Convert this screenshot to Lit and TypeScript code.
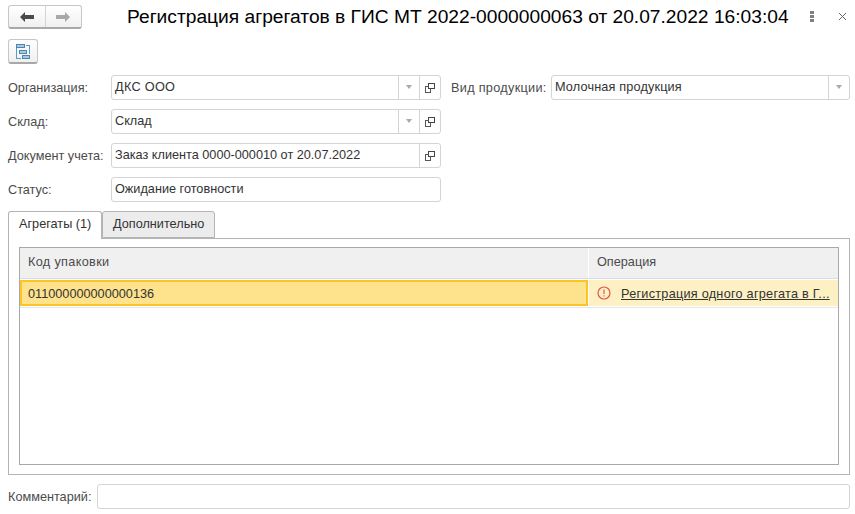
import { LitElement, html, css, svg } from "lit";
import { customElement } from "lit/decorators.js";

const openIcon = svg`<svg width="10" height="10" viewBox="0 0 10 10" fill="none" stroke-width="1" shape-rendering="crispEdges"><rect x="3.5" y="0.5" width="6" height="5" stroke="#444"/><path d="M3.5 3.5H0.5V9.5H5.5V6" stroke="#555"/></svg>`;

@customElement("app-root")
export class AppRoot extends LitElement {
  static styles = css`
    :host {
      display: block;
      width: 855px;
      height: 514px;
      background: #fff;
      font-family: "Liberation Sans", Arial, sans-serif;
      font-size: 12.7px;
      color: #333;
      overflow: hidden;
    }
    .page { display: flex; flex-direction: column; padding: 5px 5px 0 8px; height: 514px; box-sizing: border-box; }
    .head { display: flex; align-items: center; height: 24px; }
    .nav {
      display: flex; width: 74px; height: 24px; box-sizing: border-box;
      border: 1px solid #c6c6c6; border-bottom: 2px solid #a8a8a8; border-radius: 3px;
      background: linear-gradient(#fff, #f0f0f0);
    }
    .nav div { flex: 1; display: flex; align-items: center; justify-content: center; padding-top: 1px; }
    .nav div + div { border-left: 1px solid #d4d4d4; }
    .title { margin-left: 45px; font-size: 19.2px; color: #000; white-space: nowrap; flex: 1; }
    .head-icons { display: flex; align-items: center; gap: 25px; margin: 0 4px 2px 0; }
    .tool {
      margin-top: 10px; width: 30px; height: 25px; box-sizing: border-box; padding-top: 1px;
      border: 1px solid #c6c6c6; border-bottom: 2px solid #a8a8a8; border-radius: 3px;
      background: linear-gradient(#fff, #f0f0f0);
      display: flex; align-items: center; justify-content: center;
    }
    .form { margin-top: 11px; display: grid; grid-template-columns: 103px 330px 110px 299px; row-gap: 9px; align-items: center; }
    .lbl { color: #4b4b4b; white-space: nowrap; }
    .lbl2 { padding-left: 10px; letter-spacing: 0.3px; }
    .field {
      height: 25px; box-sizing: border-box; border: 1px solid #d4d4d4; border-radius: 3px;
      display: flex; align-items: stretch; background: #fff; color: #333;
    }
    .field .val { flex: 1; padding-left: 3px; line-height: 23px; white-space: nowrap; overflow: hidden; }
    .field .val.org { letter-spacing: 0.3px; }
    .field .val.prod { letter-spacing: 0.15px; }
    .btn { width: 20px; display: flex; align-items: center; justify-content: center; border-left: 1px solid #d4d4d4; }
    .caret { width: 0; height: 0; margin-bottom: 2px; border: 3px solid transparent; border-top: 4px solid #aaa; border-bottom: 0; }
    .tabs { margin-top: 9px; display: flex; height: 28px; position: relative; z-index: 1; }
    .tab {
      box-sizing: border-box; height: 27px; border: 1px solid #b4b4b4; border-radius: 3px 3px 0 0;
      padding: 0 10px; line-height: 25px; color: #333; white-space: nowrap;
    }
    .tab.on { background: #fff; height: 28px; border-bottom: 0; width: 94px; }
    .tab.off { background: #ececec; width: 113px; }
    .panel {
      margin-top: -1px; height: 237px; box-sizing: border-box; border: 1px solid #b4b4b4; padding: 8px 10px 9px;
    }
    .table { height: 100%; box-sizing: border-box; border: 1px solid #a9a9a9; }
    .thead { display: grid; grid-template-columns: 568px 1fr; height: 30px; background: #f0f0f0; border-bottom: 1px solid #dcdcdc; }
    .thead div { padding-left: 8px; line-height: 29px; color: #4b4b4b; }
    .thead .code { letter-spacing: 0.33px; }
    .thead div + div { border-left: 1px solid #fff; }
    .trow { display: grid; grid-template-columns: 568px 1fr; height: 26px; margin-top: 2px; border-bottom: 1px solid #e6e6e6; }
    .cell1 {
      box-sizing: border-box; background: #fee28c; border: 2px solid #fbc52a; margin-top: -1px; height: 26px;
      line-height: 24px; padding-left: 6px; color: #333;
    }
    .cell2 { background: #fdf1c4; display: flex; align-items: center; padding-left: 8px; height: 26px; margin-top: -1px; border-left: 1px solid #fff; }
    .link { margin-left: 10px; padding-top: 1px; color: #333; text-decoration: underline; white-space: nowrap; letter-spacing: 0.25px; }
    .comment { margin-top: 9px; display: flex; align-items: center; }
    .comment .lbl { width: 89px; }
    .comment .field { flex: 1; }
  `;

  render() {
    return html`<div class="page">
      <div class="head">
        <div class="nav">
          <div><svg width="14" height="10" viewBox="0 0 14 10"><path d="M0 5L5 0V3H14V7H5V10Z" fill="#4a4a4a"/></svg></div>
          <div><svg width="14" height="10" viewBox="0 0 14 10"><path d="M14 5L9 0V3H0V7H9V10Z" fill="#a8a8a8"/></svg></div>
        </div>
        <div class="title">Регистрация агрегатов в ГИС МТ 2022-0000000063 от 20.07.2022 16:03:04</div>
        <div class="head-icons">
          <svg width="4" height="11" viewBox="0 0 4 11"><rect width="4" height="3" fill="#808080"/><rect y="4" width="4" height="3" fill="#808080"/><rect y="8" width="4" height="3" fill="#808080"/></svg>
          <svg width="7" height="7" viewBox="0 0 7 7" stroke="#666" fill="none"><path d="M0 0L7 7M7 0L0 7"/></svg>
        </div>
      </div>
      <div class="tool">
        <svg width="14" height="15" viewBox="0 0 14 15" fill="none" shape-rendering="crispEdges">
          <path d="M0.5 4V14.5H5M9.5 1.5H13.5V10" stroke="#5b9bc9"/>
          <rect x="0.5" y="0.5" width="8" height="3" fill="#a9c9e3" stroke="#4f86b0"/>
          <rect x="3.5" y="6.5" width="7" height="3" fill="#a9c9e3" stroke="#4f86b0"/>
          <rect x="6.5" y="11.5" width="7" height="3" fill="#a9c9e3" stroke="#4f86b0"/>
        </svg>
      </div>
      <div class="form">
        <div class="lbl">Организация:</div>
        <div class="field"><div class="val org">ДКС ООО</div><div class="btn"><i class="caret"></i></div><div class="btn">${openIcon}</div></div>
        <div class="lbl lbl2">Вид продукции:</div>
        <div class="field"><div class="val prod">Молочная продукция</div><div class="btn"><i class="caret"></i></div></div>
        <div class="lbl">Склад:</div>
        <div class="field"><div class="val">Склад</div><div class="btn"><i class="caret"></i></div><div class="btn">${openIcon}</div></div>
        <div></div><div></div>
        <div class="lbl">Документ учета:</div>
        <div class="field"><div class="val">Заказ клиента 0000-000010 от 20.07.2022</div><div class="btn">${openIcon}</div></div>
        <div></div><div></div>
        <div class="lbl">Статус:</div>
        <div class="field"><div class="val">Ожидание готовности</div></div>
        <div></div><div></div>
      </div>
      <div class="tabs">
        <div class="tab on">Агрегаты (1)</div>
        <div class="tab off">Дополнительно</div>
      </div>
      <div class="panel">
        <div class="table">
          <div class="thead"><div class="code">Код упаковки</div><div>Операция</div></div>
          <div class="trow">
            <div class="cell1">011000000000000136</div>
            <div class="cell2">
              <svg width="14" height="14" viewBox="0 0 14 14" fill="none"><circle cx="7" cy="7" r="6" stroke="#e2564a" stroke-width="1.2"/><path d="M7 3.5V8M7 9.3V10.6" stroke="#e2564a" stroke-width="1.2"/></svg>
              <span class="link">Регистрация одного агрегата в Г...</span>
            </div>
          </div>
        </div>
      </div>
      <div class="comment"><div class="lbl">Комментарий:</div><div class="field"></div></div>
    </div>`;
  }
}
